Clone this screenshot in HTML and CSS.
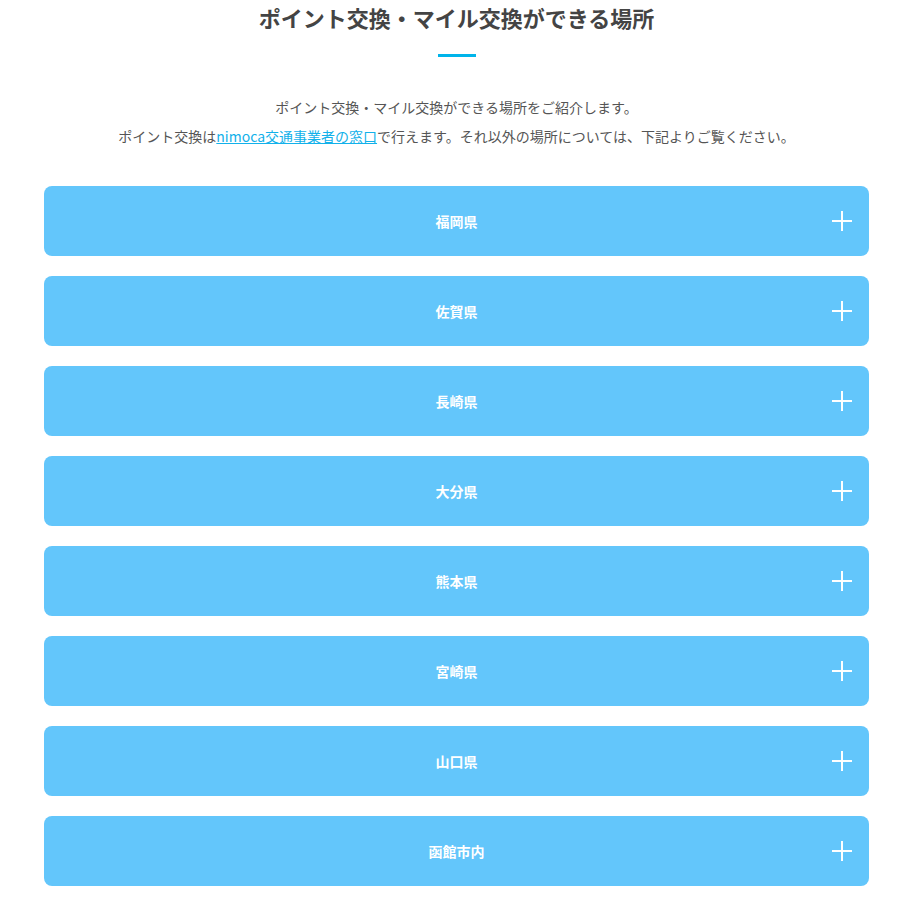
FILE: index.html
```html
<!DOCTYPE html>
<html lang="ja">
<head>
    <meta charset="UTF-8">
    <meta name="viewport" content="width=device-width, initial-scale=1.0">
    <link rel="stylesheet" href="styles.css">
    <title>ポイント交換・マイル交換ができる場所</title>
</head>
<body>
    <div class="contenedor">
        <h2 class="titulo">ポイント交換・マイル交換ができる場所</h2>
        <div class="linea"></div>

        <p class="intro">
            ポイント交換・マイル交換ができる場所をご紹介します。<br>
            ポイント交換は<a href="#">nimoca交通事業者の窓口</a>で行えます。それ以外の場所については、下記よりご覧ください。
        </p>

        <div class="lista">
            <div class="barra"><span>福岡県</span><i class="mas"></i></div>
            <div class="barra"><span>佐賀県</span><i class="mas"></i></div>
            <div class="barra"><span>長崎県</span><i class="mas"></i></div>
            <div class="barra"><span>大分県</span><i class="mas"></i></div>
            <div class="barra"><span>熊本県</span><i class="mas"></i></div>
            <div class="barra"><span>宮崎県</span><i class="mas"></i></div>
            <div class="barra"><span>山口県</span><i class="mas"></i></div>
            <div class="barra"><span>函館市内</span><i class="mas"></i></div>
        </div>
    </div>
</body>
</html>
```

FILE: styles.css
```css
body {
    margin: 0;
    background-color: white;
    font-family: "Noto Sans CJK JP", "Noto Sans", sans-serif;
    color: #555;
}

.contenedor {
    width: 825px;
    margin-left: 44px;
    text-align: center;
}

.titulo {
    margin: 0;
    font-size: 22px;
    line-height: 34px;
    color: #444;
    font-weight: bold;
}

.linea {
    width: 38px;
    height: 3px;
    margin: 20px auto 0;
    background-color: #00b4ea;
}

.intro {
    margin: 36px 0 0;
    font-size: 14px;
    line-height: 29px;
}

.intro a {
    color: #12b1ea;
}

.lista {
    display: flex;
    flex-direction: column;
    gap: 20px;
    margin-top: 35px;
}

.barra {
    display: flex;
    justify-content: center;
    align-items: center;
    height: 70px;
    border-radius: 8px;
    background-color: #63c6fb;
    color: white;
    font-size: 14px;
    font-weight: bold;
    position: relative;
}

.mas {
    position: absolute;
    right: 17px;
    top: 25px;
    width: 20px;
    height: 20px;
}

.mas::before,
.mas::after {
    content: "";
    position: absolute;
    background-color: white;
}

.mas::before {
    left: 0;
    top: 9px;
    width: 20px;
    height: 2px;
}

.mas::after {
    left: 9px;
    top: 0;
    width: 2px;
    height: 20px;
}
```
